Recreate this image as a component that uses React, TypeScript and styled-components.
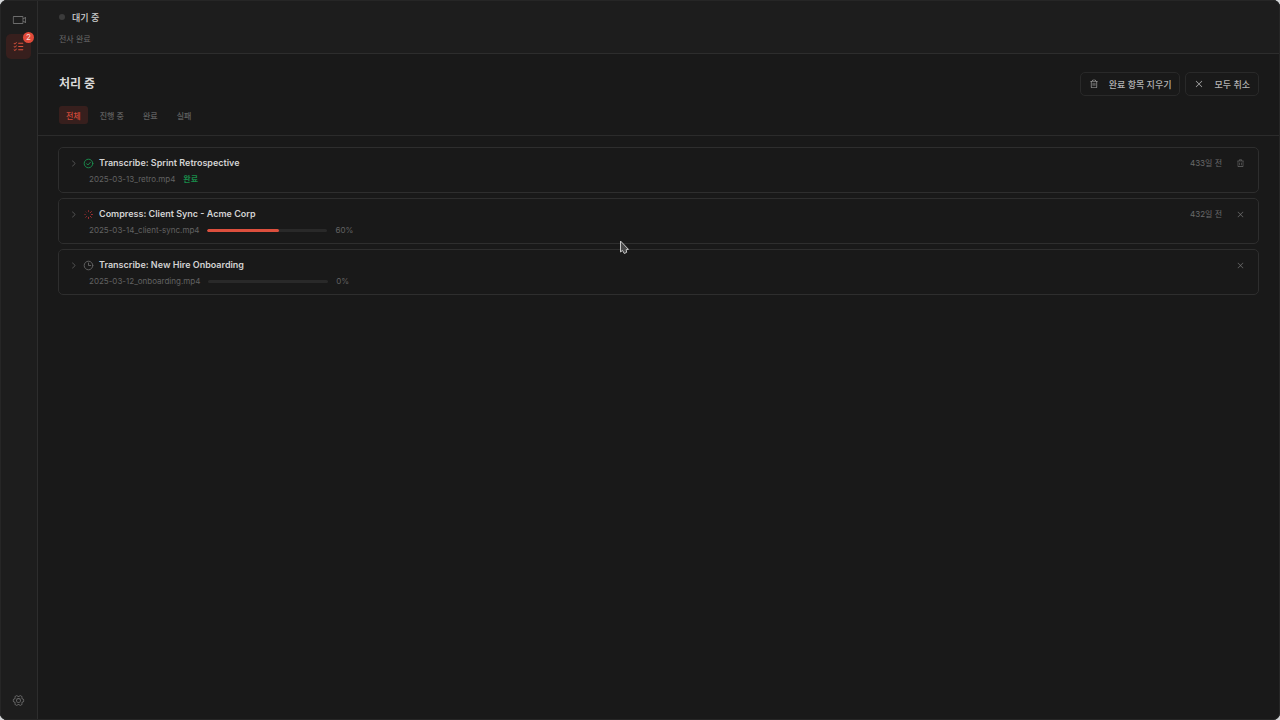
import React from "react";
import styled, { createGlobalStyle } from "styled-components";
import { PiVideoCamera, PiListChecks, PiGearSix, PiTrash, PiX, PiCaretRight } from "react-icons/pi";

const Global = createGlobalStyle`
  * { box-sizing: border-box; }
  body { margin: 0; background: #d4d6d8; color: #cfcfcf; font-family: Inter, "Noto Sans CJK KR", sans-serif; }
  button { font: inherit; color: inherit; background: none; border: 0; padding: 0; display: inline-flex; align-items: center; justify-content: center; }
  h1, h2, p, ul { margin: 0; padding: 0; }
  svg { display: block; flex: none; }
`;

const Shell = styled.div`
  display: flex;
  min-height: 100vh;
  overflow: hidden;
  background: #191919;
  outline: 1px solid #262626;
  outline-offset: -1px;
  border-radius: 7px;
`;

const Sidebar = styled.nav`
  display: flex;
  flex-direction: column;
  align-items: center;
  gap: 2px;
  flex: none;
  width: 38px;
  padding: 7px 0;
  background: #1d1d1d;
  border-right: 1px solid #2d2d2d;
`;

const NavButton = styled.button<{ $active?: boolean }>`
  && {
    position: relative;
    width: 25px;
    height: 25px;
    border-radius: 5px;
    color: ${(p) => (p.$active ? "#d9523c" : "#6c6c6c")};
    background: ${(p) => (p.$active ? "#371f1d" : "transparent")};
  }
`;

const Spacer = styled.div`
  flex: 1;
`;

const Badge = styled.span`
  position: absolute;
  top: -2px;
  right: -3px;
  width: 11px;
  height: 11px;
  border-radius: 6px;
  background: #e04a3a;
  color: #f4dedb;
  font-size: 8px;
  line-height: 11px;
  text-align: center;
`;

const Main = styled.main`
  flex: 1;
  min-width: 0;
`;

const StatusBar = styled.header`
  height: 54px;
  padding: 9px 21px 0;
  background: #1d1d1d;
  border-bottom: 1px solid #2d2d2d;
`;

const StatusLine = styled.div`
  display: flex;
  align-items: center;
  gap: 7px;
  height: 16px;
  font-size: 9px;
  font-weight: 500;
`;

const Dot = styled.span`
  width: 6px;
  height: 6px;
  border-radius: 3px;
  background: #3b3b3b;
`;

const StatusNote = styled.p`
  && {
    margin-top: 7px;
    font-size: 8px;
    line-height: 14px;
    color: #6b6b6b;
  }
`;

const PageHead = styled.section`
  height: 82px;
  padding: 18px 21px 0;
  border-bottom: 1px solid #2b2b2b;
`;

const TitleRow = styled.div`
  display: flex;
  align-items: center;
  justify-content: space-between;
  height: 24px;
`;

const Title = styled.h1`
  font-size: 12px;
  line-height: 22px;
  font-weight: 600;
  color: #d8d8d8;
`;

const Actions = styled.div`
  display: flex;
  gap: 5px;
`;

const ActionButton = styled.button`
  && {
    gap: 10px;
    height: 24px;
    padding: 0 8px;
    border: 1px solid #292929;
    border-radius: 5px;
    font-size: 9px;
    font-weight: 500;
    color: #b4b4b4;
  }
`;

const Tabs = styled.div`
  display: flex;
  gap: 5px;
  margin-top: 10px;
`;

const Tab = styled.button<{ $active?: boolean }>`
  && {
    height: 18px;
    padding: 0 7px;
    border-radius: 3px;
    font-size: 8px;
    font-weight: 500;
    color: ${(p) => (p.$active ? "#d04a39" : "#606060")};
    background: ${(p) => (p.$active ? "#371f1d" : "transparent")};
  }
`;

const Jobs = styled.ul`
  && {
    display: flex;
    flex-direction: column;
    gap: 5px;
    padding: 11px 21px 11px 20px;
    list-style: none;
  }
`;

const Job = styled.li`
  height: 46px;
  padding: 7px 13px 0 10px;
  border: 1px solid #2e2e2e;
  border-radius: 5px;
`;

const JobTop = styled.div`
  display: flex;
  align-items: center;
  height: 16px;
  color: #6b6b6b;
`;

const Expand = styled.button`
  && {
    width: 9px;
    height: 16px;
    color: #5a5a5a;
  }
`;

const JobIcon = styled.span<{ $tone: string }>`
  margin: 0 5px;
  color: ${(p) => p.$tone};
`;

const JobTitle = styled.h2`
  flex: 1;
  font-size: 9px;
  line-height: 16px;
  font-weight: 600;
  color: #d2d2d2;
`;

const Ago = styled.time`
  margin-right: 14px;
  font-size: 8px;
  line-height: 16px;
`;

const JobMeta = styled.div`
  display: flex;
  align-items: center;
  gap: 8px;
  height: 12px;
  margin: 2px 0 0 20px;
  font-size: 8px;
  line-height: 12px;
  color: #626262;
`;

const Done = styled.span`
  font-weight: 600;
  color: #188a49;
`;

const Track = styled.div`
  width: 120px;
  height: 3px;
  border-radius: 2px;
  background: #292929;
  overflow: hidden;
`;

const Fill = styled.div`
  height: 100%;
  border-radius: 2px;
  background: #dc4f3d;
`;

const Pointer = styled.svg`
  position: fixed;
  left: 619px;
  top: 239px;
`;

type State = "done" | "running" | "queued";

const jobs: { title: string; file: string; state: State; progress: number; ago?: string }[] = [
  { title: "Transcribe: Sprint Retrospective", file: "2025-03-13_retro.mp4", state: "done", progress: 100, ago: "433일 전" },
  { title: "Compress: Client Sync - Acme Corp", file: "2025-03-14_client-sync.mp4", state: "running", progress: 60, ago: "432일 전" },
  { title: "Transcribe: New Hire Onboarding", file: "2025-03-12_onboarding.mp4", state: "queued", progress: 0 },
];

const tones: Record<State, string> = { done: "#1b9450", running: "#c0353a", queued: "#666" };

const spokes = [
  { angle: 0, opacity: 0.7 },
  { angle: 45, opacity: 1 },
  { angle: 90, opacity: 0.9 },
  { angle: 135, opacity: 1 },
  { angle: 180, opacity: 0.9 },
  { angle: 225, opacity: 0.8 },
  { angle: 270, opacity: 0.5 },
  { angle: 315, opacity: 0.3 },
];

const StateIcon = ({ state }: { state: State }) => (
  <svg width="11" height="11" viewBox="0 0 22 22" fill="none" stroke="currentColor" strokeWidth="1.8" strokeLinecap="round" strokeLinejoin="round">
    {state === "running" ? (
      spokes.map((s) => (
        <path key={s.angle} d="M11 3v2.4" transform={`rotate(${s.angle} 11 11)`} opacity={s.opacity} />
      ))
    ) : (
      <>
        <circle cx="11" cy="11" r="8.6" />
        <path d={state === "done" ? "M7.2 11.4l2.6 2.6 5-5.4" : "M11 6v5h4.4"} />
      </>
    )}
  </svg>
);

export default function App() {
  return (
    <>
      <Global />
      <Shell>
        <Sidebar>
          <NavButton aria-label="녹화"><PiVideoCamera size={14} /></NavButton>
          <NavButton $active aria-label="처리 중"><PiListChecks size={13} /><Badge>2</Badge></NavButton>
          <Spacer />
          <NavButton aria-label="설정"><PiGearSix size={13} /></NavButton>
        </Sidebar>
        <Main>
          <StatusBar>
            <StatusLine><Dot />대기 중</StatusLine>
            <StatusNote>전사 완료</StatusNote>
          </StatusBar>
          <PageHead>
            <TitleRow>
              <Title>처리 중</Title>
              <Actions>
                <ActionButton><PiTrash size={10} />완료 항목 지우기</ActionButton>
                <ActionButton><PiX size={10} />모두 취소</ActionButton>
              </Actions>
            </TitleRow>
            <Tabs>
              <Tab $active>전체</Tab>
              <Tab>진행 중</Tab>
              <Tab>완료</Tab>
              <Tab>실패</Tab>
            </Tabs>
          </PageHead>
          <Jobs>
            {jobs.map((job) => (
              <Job key={job.file}>
                <JobTop>
                  <Expand aria-label="펼치기"><PiCaretRight size={9} /></Expand>
                  <JobIcon $tone={tones[job.state]}><StateIcon state={job.state} /></JobIcon>
                  <JobTitle>{job.title}</JobTitle>
                  {job.ago && <Ago>{job.ago}</Ago>}
                  <button aria-label={job.state === "done" ? "삭제" : "취소"}>
                    {job.state === "done" ? <PiTrash size={9} /> : <PiX size={9} />}
                  </button>
                </JobTop>
                <JobMeta>
                  <span>{job.file}</span>
                  {job.state === "done" ? (
                    <Done>완료</Done>
                  ) : (
                    <>
                      <Track role="progressbar" aria-label={job.title} aria-valuenow={job.progress}><Fill style={{ width: `${job.progress}%` }} /></Track>
                      <span>{job.progress}%</span>
                    </>
                  )}
                </JobMeta>
              </Job>
            ))}
          </Jobs>
        </Main>
      </Shell>
      <Pointer width="11" height="17" viewBox="0 0 11 17" aria-hidden="true">
        <path d="M1.5 2v11l2-1.6 1.8 3.1 2.4-1.2-.6-2.6 2.4-.3z" fill="#4a4a4a" stroke="#c8c8c8" strokeLinejoin="round" />
      </Pointer>
    </>
  );
}
